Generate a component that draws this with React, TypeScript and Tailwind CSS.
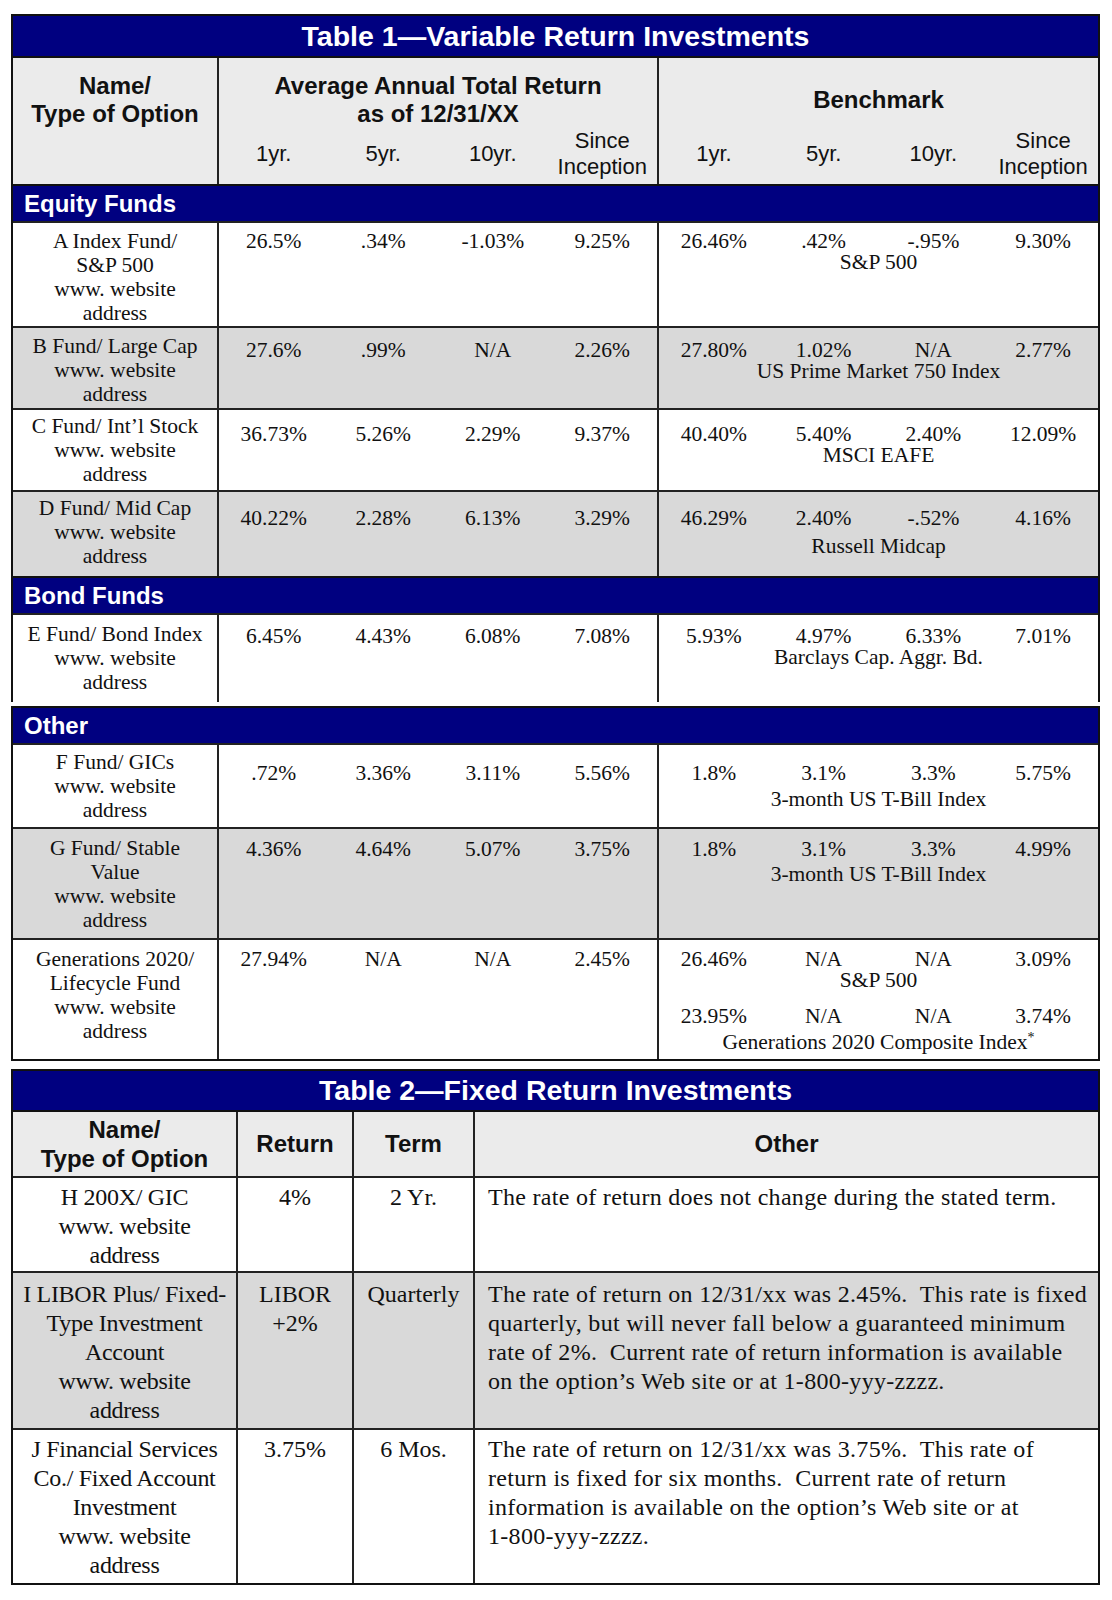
import React from "react";

const SANS = "font-['Liberation_Sans',Arial,sans-serif]";
const SERIF = "font-['Liberation_Serif','Times_New_Roman',serif]";

type Bench = { vals: string[]; label: React.ReactNode; pt: string };

type FundRow = {
  name: string[];
  ret: string[];
  bench: Bench[];
  grey?: boolean;
  h: string;
  namePt: string;
  numPt: string;
};

const equity: FundRow[] = [
  {
    name: ["A Index Fund/", "S&P 500", "www. website", "address"],
    ret: ["26.5%", ".34%", "-1.03%", "9.25%"],
    bench: [{ vals: ["26.46%", ".42%", "-.95%", "9.30%"], label: "S&P 500", pt: "mt-0" }],
    h: "h-[105px]",
    namePt: "pt-[6px]",
    numPt: "pt-[8px]",
  },
  {
    name: ["B Fund/ Large Cap", "www. website", "address"],
    ret: ["27.6%", ".99%", "N/A", "2.26%"],
    bench: [{ vals: ["27.80%", "1.02%", "N/A", "2.77%"], label: "US Prime Market 750 Index", pt: "mt-0" }],
    grey: true,
    h: "h-[82px]",
    namePt: "pt-[6px]",
    numPt: "pt-[12px]",
  },
  {
    name: ["C Fund/ Int’l Stock", "www. website", "address"],
    ret: ["36.73%", "5.26%", "2.29%", "9.37%"],
    bench: [{ vals: ["40.40%", "5.40%", "2.40%", "12.09%"], label: "MSCI EAFE", pt: "mt-0" }],
    h: "h-[82px]",
    namePt: "pt-[4px]",
    numPt: "pt-[14px]",
  },
  {
    name: ["D Fund/ Mid Cap", "www. website", "address"],
    ret: ["40.22%", "2.28%", "6.13%", "3.29%"],
    bench: [{ vals: ["46.29%", "2.40%", "-.52%", "4.16%"], label: "Russell Midcap", pt: "mt-[7px]" }],
    grey: true,
    h: "h-[86px]",
    namePt: "pt-[4px]",
    numPt: "pt-[16px]",
  },
];

const bond: FundRow[] = [
  {
    name: ["E Fund/ Bond Index", "www. website", "address"],
    ret: ["6.45%", "4.43%", "6.08%", "7.08%"],
    bench: [{ vals: ["5.93%", "4.97%", "6.33%", "7.01%"], label: "Barclays Cap. Aggr. Bd.", pt: "mt-0" }],
    h: "h-[89px]",
    namePt: "pt-[7px]",
    numPt: "pt-[11px]",
  },
];

const other: FundRow[] = [
  {
    name: ["F Fund/ GICs", "www. website", "address"],
    ret: [".72%", "3.36%", "3.11%", "5.56%"],
    bench: [{ vals: ["1.8%", "3.1%", "3.3%", "5.75%"], label: "3-month US T-Bill Index", pt: "mt-[5px]" }],
    h: "h-[84px]",
    namePt: "pt-[5px]",
    numPt: "pt-[18px]",
  },
  {
    name: ["G Fund/ Stable", "Value", "www. website", "address"],
    ret: ["4.36%", "4.64%", "5.07%", "3.75%"],
    bench: [{ vals: ["1.8%", "3.1%", "3.3%", "4.99%"], label: "3-month US T-Bill Index", pt: "mt-[4px]" }],
    grey: true,
    h: "h-[111px]",
    namePt: "pt-[7px]",
    numPt: "pt-[10px]",
  },
  {
    name: ["Generations 2020/", "Lifecycle Fund", "www. website", "address"],
    ret: ["27.94%", "N/A", "N/A", "2.45%"],
    bench: [
      { vals: ["26.46%", "N/A", "N/A", "3.09%"], label: "S&P 500", pt: "mt-0" },
      {
        vals: ["23.95%", "N/A", "N/A", "3.74%"],
        label: (
          <>
            Generations 2020 Composite Index<sup className="text-[14px]">*</sup>
          </>
        ),
        pt: "mt-[5px]",
      },
    ],
    h: "h-[121px]",
    namePt: "pt-[7px]",
    numPt: "pt-[9px]",
  },
];

function Bar({ label }: { label: string }) {
  return (
    <div
      className={`flex items-center h-[37px] border-t-2 border-[#111] bg-[#000080] pl-[11px] text-white text-[24px] font-bold ${SANS}`}
    >
      {label}
    </div>
  );
}

function Row({ r }: { r: FundRow }) {
  return (
    <div
      className={`flex ${r.h} border-t-2 border-[#222] ${r.grey ? "bg-[#d9d9d9]" : "bg-white"} text-[21.5px] text-[#111]`}
    >
      <div className={`w-[206px] border-r-2 border-[#222] text-center leading-[24px] ${r.namePt}`}>
        {r.name.map((l, i) => (
          <div key={i} className="whitespace-nowrap">
            {l}
          </div>
        ))}
      </div>
      <div className={`w-[440px] border-r-2 border-[#222] ${r.numPt}`}>
        <div className="grid grid-cols-4 text-center leading-[20px]">
          {r.ret.map((v, i) => (
            <div key={i}>{v}</div>
          ))}
        </div>
      </div>
      <div className={`flex-1 ${r.numPt}`}>
        {r.bench.map((b, bi) => (
          <div key={bi} className={bi > 0 ? "mt-[15px]" : ""}>
            <div className="grid grid-cols-4 text-center leading-[20px]">
              {b.vals.map((v, i) => (
                <div key={i}>{v}</div>
              ))}
            </div>
            <div className={`text-center leading-[22px] whitespace-nowrap ${b.pt}`}>{b.label}</div>
          </div>
        ))}
      </div>
    </div>
  );
}

function SubHeads() {
  return (
    <div className="grid grid-cols-4 h-[52px] items-center text-center text-[22px] leading-[26px]">
      <div>1yr.</div>
      <div>5yr.</div>
      <div>10yr.</div>
      <div>
        Since
        <br />
        Inception
      </div>
    </div>
  );
}

function Table1() {
  return (
    <div className="w-[1089px]">
      <div className="border-x-2 border-t-2 border-[#111]">
        <div
          className={`flex items-center justify-center h-[40px] bg-[#000080] text-white text-[28.5px] font-bold ${SANS}`}
        >
          Table 1—Variable Return Investments
        </div>
        <div className={`flex h-[128px] border-t-2 border-[#111] bg-[#ebebeb] text-[#111] ${SANS}`}>
          <div className="w-[206px] border-r-2 border-[#222] pt-[14px] text-center text-[24px] font-bold leading-[28px]">
            <div>Name/</div>
            <div>Type of Option</div>
          </div>
          <div className="w-[440px] border-r-2 border-[#222] pt-[14px]">
            <div className="h-[56px] text-center text-[24px] font-bold leading-[28px]">
              <div>Average Annual Total Return</div>
              <div>as of 12/31/XX</div>
            </div>
            <SubHeads />
          </div>
          <div className="flex-1 pt-[14px]">
            <div className="flex h-[56px] items-center justify-center text-[24px] font-bold">Benchmark</div>
            <SubHeads />
          </div>
        </div>
        <Bar label="Equity Funds" />
        {equity.map((r, i) => (
          <Row key={i} r={r} />
        ))}
        <Bar label="Bond Funds" />
        {bond.map((r, i) => (
          <Row key={i} r={r} />
        ))}
      </div>
      <div className="mt-[4px] border-x-2 border-b-2 border-[#111]">
        <Bar label="Other" />
        {other.map((r, i) => (
          <Row key={i} r={r} />
        ))}
      </div>
    </div>
  );
}

type FixedRow = {
  name: string[];
  ret: string[];
  term: string;
  other: string[];
  grey?: boolean;
  h: string;
  pt: string;
};

const fixed: FixedRow[] = [
  {
    name: ["H 200X/ GIC", "www. website", "address"],
    ret: ["4%"],
    term: "2 Yr.",
    other: ["The rate of return does not change during the stated term."],
    h: "h-[95px]",
    pt: "pt-[5px]",
  },
  {
    name: ["I LIBOR Plus/ Fixed-", "Type Investment", "Account", "www. website", "address"],
    ret: ["LIBOR", "+2%"],
    term: "Quarterly",
    other: [
      "The rate of return on 12/31/xx was 2.45%.\u00a0 This rate is fixed",
      "quarterly, but will never fall below a guaranteed minimum",
      "rate of 2%.\u00a0 Current rate of return information is available",
      "on the option’s Web site or at 1-800-yyy-zzzz.",
    ],
    grey: true,
    h: "h-[157px]",
    pt: "pt-[7px]",
  },
  {
    name: ["J Financial Services", "Co./ Fixed Account", "Investment", "www. website", "address"],
    ret: ["3.75%"],
    term: "6 Mos.",
    other: [
      "The rate of return on 12/31/xx was 3.75%.\u00a0 This rate of",
      "return is fixed for six months.\u00a0 Current rate of return",
      "information is available on the option’s Web site or at",
      "1-800-yyy-zzzz.",
    ],
    h: "h-[155px]",
    pt: "pt-[5px]",
  },
];

function Table2() {
  return (
    <div className="w-[1089px] mt-[8px] border-2 border-[#111]">
      <div
        className={`flex items-center justify-center h-[39px] bg-[#000080] text-white text-[28.5px] font-bold ${SANS}`}
      >
        Table 2—Fixed Return Investments
      </div>
      <div className={`flex h-[66px] border-t-2 border-[#111] bg-[#ebebeb] text-[24px] font-bold text-[#111] ${SANS}`}>
        <div className="flex w-[225px] flex-col items-center justify-center border-r-2 border-[#222] leading-[29px]">
          <div>Name/</div>
          <div>Type of Option</div>
        </div>
        <div className="flex w-[116px] items-center justify-center border-r-2 border-[#222]">Return</div>
        <div className="flex w-[121px] items-center justify-center border-r-2 border-[#222]">Term</div>
        <div className="flex flex-1 items-center justify-center">Other</div>
      </div>
      {fixed.map((r, i) => (
        <div
          key={i}
          className={`flex ${r.h} border-t-2 border-[#222] ${r.grey ? "bg-[#d9d9d9]" : "bg-white"} text-[24px] leading-[29px] text-[#111]`}
        >
          <div className={`w-[225px] border-r-2 border-[#222] text-center tracking-[-0.3px] ${r.pt}`}>
            {r.name.map((l, j) => (
              <div key={j} className="whitespace-nowrap">
                {l}
              </div>
            ))}
          </div>
          <div className={`w-[116px] border-r-2 border-[#222] text-center ${r.pt}`}>
            {r.ret.map((l, j) => (
              <div key={j}>{l}</div>
            ))}
          </div>
          <div className={`w-[121px] border-r-2 border-[#222] text-center ${r.pt}`}>{r.term}</div>
          <div className={`flex-1 pl-[13px] tracking-[0.3px] ${r.pt}`}>
            {r.other.map((l, j) => (
              <div key={j} className="whitespace-nowrap">
                {l}
              </div>
            ))}
          </div>
        </div>
      ))}
    </div>
  );
}

export default function App() {
  return (
    <div className={`min-h-[1600px] bg-white pt-[14px] pl-[11px] ${SERIF}`}>
      <Table1 />
      <Table2 />
    </div>
  );
}
